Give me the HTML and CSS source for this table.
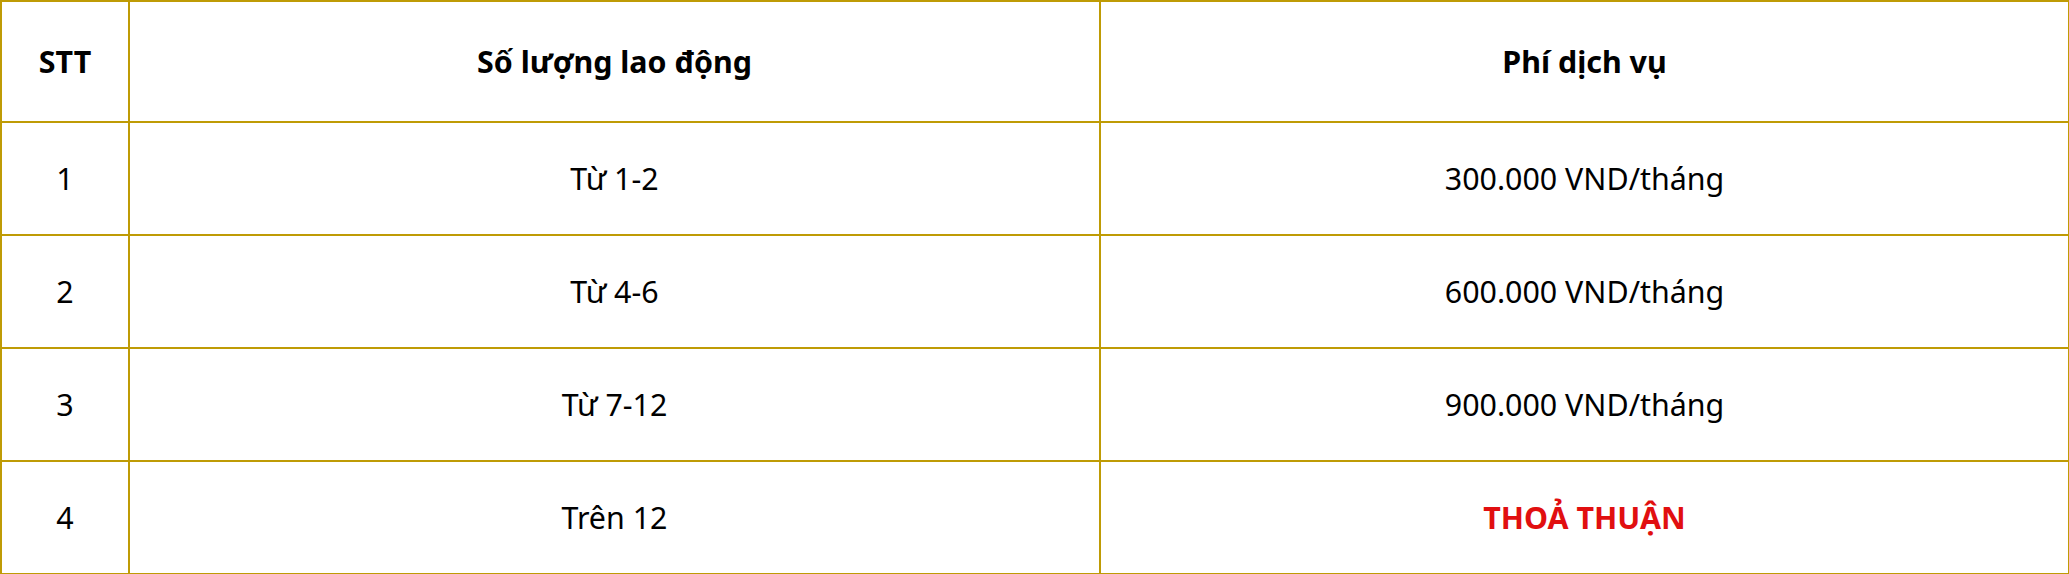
FILE: index.html
```html
<!DOCTYPE html>
<html lang="vi">
<head>
<meta charset="utf-8">
<title>Phí dịch vụ</title>
<link rel="stylesheet" href="styles.css">
</head>
<body>
<table class="fee-table">
  <colgroup>
    <col class="col-stt">
    <col class="col-qty">
    <col class="col-fee">
  </colgroup>
  <thead>
    <tr>
      <th>STT</th>
      <th>Số lượng lao động</th>
      <th>Phí dịch vụ</th>
    </tr>
  </thead>
  <tbody>
    <tr>
      <td>1</td>
      <td>Từ 1-2</td>
      <td>300.000 VND/tháng</td>
    </tr>
    <tr>
      <td>2</td>
      <td>Từ 4-6</td>
      <td>600.000 VND/tháng</td>
    </tr>
    <tr>
      <td>3</td>
      <td>Từ 7-12</td>
      <td>900.000 VND/tháng</td>
    </tr>
    <tr>
      <td>4</td>
      <td>Trên 12</td>
      <td><strong class="deal">THOẢ THUẬN</strong></td>
    </tr>
  </tbody>
</table>
</body>
</html>
```

FILE: styles.css
```css
html, body {
  margin: 0;
  padding: 0;
  background: #ffffff;
}

body {
  font-family: "Noto Sans", "Open Sans", "DejaVu Sans", sans-serif;
  color: #000000;
}

.fee-table {
  width: 2068px;
  table-layout: fixed;
  border-collapse: collapse;
  font-size: 30.4px;
  line-height: 1.3;
}

.col-stt { width: 128px; }
.col-qty { width: 971px; }
.col-fee { width: 969px; }

.fee-table th,
.fee-table td {
  border: 2px solid #bf9b05;
  text-align: center;
  vertical-align: middle;
  padding: 0 8px;
}

.fee-table th {
  height: 119px;
  font-weight: 700;
}

.fee-table td {
  height: 111px;
  font-weight: 400;
}

.deal {
  color: #e10f10;
  font-weight: 700;
}
```
